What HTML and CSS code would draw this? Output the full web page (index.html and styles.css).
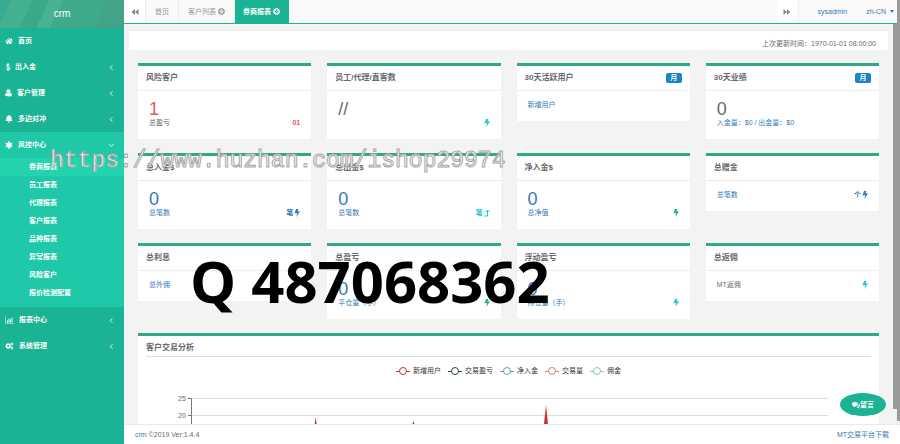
FILE: index.html
```html
<!DOCTYPE html>
<html lang="zh-CN">
<head>
  <meta charset="UTF-8">
  <title>crm</title>
  <link rel="stylesheet" href="styles.css">
</head>
<body>
  <svg class="defs" aria-hidden="true">
    <symbol id="home" viewBox="0 0 16 16"><path d="M8 2 0 9l1 1 7-6 7 6 1-1-2-2V3h-2v2zM8 5.500 3 10v4h4v-3h2v3h4v-4z"/></symbol>
    <symbol id="dollar" viewBox="2 0 12 16"><path d="M12 5C11 2 5 2 5 5s7 2.500 7 6-7 3-8 0M8 0v16" fill="none" stroke="currentColor" stroke-width="2"/></symbol>
    <symbol id="user" viewBox="1 0 14 16"><circle cx="8" cy="4.500" r="4"/><path d="M1 14c0-5 2-6 4-6 2 1.500 4 1.500 6 0 2 0 4 1 4 6-1 1-13 1-14 0z"/></symbol>
    <symbol id="bell" viewBox="0 0 16 16"><path d="M8 0c1 0 1 1 1 1 6 2 3 7 6 11H1C4 8 1 3 7 1c0 0 0-1 1-1zM6 13h4c0 3-4 3-4 0z"/></symbol>
    <symbol id="asterisk" viewBox="0 0 16 16"><path d="M8 1v14M2 4.500l12 7M14 4.500l-12 7" stroke="currentColor" stroke-width="4"/></symbol>
    <symbol id="bars" viewBox="0 0 16 16"><path d="M0 1h1v13h15v1H0zM3 9h2v4H3zM6 5h2v8H6zM9 7h2v6H9zM12 3h2v10h-2z"/></symbol>
    <symbol id="cogs" viewBox="0 0 16 16"><g fill="none" stroke="currentColor"><circle cx="5.500" cy="8" r="3.500" stroke-width="3"/><circle cx="5.500" cy="8" r="5" stroke-width="1.500" stroke-dasharray="2 2"/><circle cx="13" cy="4" r="1.800" stroke-width="2"/><circle cx="13" cy="12" r="1.800" stroke-width="2"/></g></symbol>
    <symbol id="left" viewBox="0 0 16 16"><path d="M10 3 5 8l5 5" fill="none" stroke="currentColor" stroke-width="2"/></symbol>
    <symbol id="down" viewBox="0 0 16 16"><path d="m3 5 5 5 5-5" fill="none" stroke="currentColor" stroke-width="2"/></symbol>
    <symbol id="backward" viewBox="0 0 16 16"><path d="M8 2v12L1 8zM15 2v12L8 8z"/></symbol>
    <symbol id="forward" viewBox="0 0 16 16"><path d="M1 2v12l7-6zM8 2v12l7-6z"/></symbol>
    <symbol id="close" viewBox="0 0 16 16"><circle cx="8" cy="8" r="6" fill="none" stroke="currentColor" stroke-width="3"/><path d="m5.500 5.500 5 5m0-5-5 5" stroke="currentColor" stroke-width="2"/></symbol>
    <symbol id="bolt" viewBox="2 0 12 16"><path d="M6 0h5L9 5l5-1L7 16l1-8-5 1z"/></symbol>
    <symbol id="levelup" viewBox="2 0 12 16"><path d="M3 14h6V4M5 6l4-4 4 4" fill="none" stroke="currentColor" stroke-width="2"/></symbol>
    <symbol id="comments" viewBox="0 0 16 16"><path d="M6 2c8 0 8 9 0 9-1 0-2 1-4 1l1-2C-2 8-1 2 6 2zM13 5c4 2 4 6 1 7l1 3c-3 0-4-2-6-2 4-1 5-4 4-8z"/></symbol>
  </svg>

  <div class="wrapper">
    <nav class="sidebar">
      <div class="brand">crm</div>
      <ul class="menu">
        <li><a href="#"><svg class="icon"><use href="#home"/></svg>首页</a></li>
        <li><a href="#"><svg class="icon narrow"><use href="#dollar"/></svg>出入金<svg class="arrow"><use href="#left"/></svg></a></li>
        <li><a href="#"><svg class="icon user"><use href="#user"/></svg>客户管理<svg class="arrow"><use href="#left"/></svg></a></li>
        <li><a href="#"><svg class="icon"><use href="#bell"/></svg>多边对冲<svg class="arrow"><use href="#left"/></svg></a></li>
        <li class="open">
          <a href="#"><svg class="icon"><use href="#asterisk"/></svg>风控中心<svg class="arrow"><use href="#down"/></svg></a>
          <ul class="submenu">
            <li class="current"><a href="#">券商报表</a></li>
            <li><a href="#">员工报表</a></li>
            <li><a href="#">代理报表</a></li>
            <li><a href="#">客户报表</a></li>
            <li><a href="#">品种报表</a></li>
            <li><a href="#">异常报表</a></li>
            <li><a href="#">风险客户</a></li>
            <li><a href="#">报价检测配置</a></li>
          </ul>
        </li>
        <li><a href="#"><svg class="icon wide"><use href="#bars"/></svg>报表中心<svg class="arrow"><use href="#left"/></svg></a></li>
        <li><a href="#"><svg class="icon wide"><use href="#cogs"/></svg>系统管理<svg class="arrow"><use href="#left"/></svg></a></li>
      </ul>
    </nav>

    <div class="page">
      <header class="topbar">
        <button class="roll" aria-label="向左"><svg class="icon"><use href="#backward"/></svg></button>
        <div class="tabs">
          <a href="#" class="tab">首页</a>
          <a href="#" class="tab">客户列表<svg class="close"><use href="#close"/></svg></a>
          <a href="#" class="tab active">券商报表<svg class="close"><use href="#close"/></svg></a>
        </div>
        <button class="roll" aria-label="向右"><svg class="icon"><use href="#forward"/></svg></button>
        <a href="#" class="account">sysadmin</a>
        <a href="#" class="lang">zh-CN<span class="caret"></span></a>
      </header>

      <main class="content">
        <div class="update">上次更新时间：1970-01-01 08:00:00</div>

        <div class="cards">
          <section class="card">
            <h5>风险客户</h5>
            <div class="body danger"><div class="num">1</div><div class="line"><span class="grey">总盈亏</span><b>01</b></div></div>
          </section>
          <section class="card">
            <h5>员工/代理/直客数</h5>
            <div class="body plain"><div class="num">//</div><div class="line"><span></span><b class="cyan"><svg><use href="#bolt"/></svg></b></div></div>
          </section>
          <section class="card">
            <h5>30天活跃用户<span class="badge">月</span></h5>
            <div class="body"><div class="line"><a href="#">新增用户</a></div></div>
          </section>
          <section class="card">
            <h5>30天业绩<span class="badge">月</span></h5>
            <div class="body"><div class="num grey">0</div><div class="line"><a href="#">入金量：$0 / 出金量：$0</a></div></div>
          </section>

          <section class="card">
            <h5>总入金$</h5>
            <div class="body"><div class="num">0</div><div class="line"><a href="#">总笔数</a><b>笔<svg><use href="#bolt"/></svg></b></div></div>
          </section>
          <section class="card">
            <h5>总出金$</h5>
            <div class="body"><div class="num">0</div><div class="line"><a href="#">总笔数</a><b class="cyan">笔 <svg><use href="#levelup"/></svg></b></div></div>
          </section>
          <section class="card">
            <h5>净入金$</h5>
            <div class="body"><div class="num">0</div><div class="line"><a href="#">总净值</a><b class="green"><svg><use href="#bolt"/></svg></b></div></div>
          </section>
          <section class="card">
            <h5>总赠金</h5>
            <div class="body"><div class="line"><a href="#">总笔数</a><b>个 <svg><use href="#bolt"/></svg></b></div></div>
          </section>

          <section class="card">
            <h5>总利息</h5>
            <div class="body"><div class="line"><a href="#">总外佣</a></div></div>
          </section>
          <section class="card">
            <h5>总盈亏</h5>
            <div class="body"><div class="num">0</div><div class="line"><a href="#">平仓量（手）</a><b class="green"><svg><use href="#bolt"/></svg></b></div></div>
          </section>
          <section class="card">
            <h5>浮动盈亏</h5>
            <div class="body"><div class="num">0</div><div class="line"><a href="#">持仓量（手）</a><b class="cyan"><svg><use href="#bolt"/></svg></b></div></div>
          </section>
          <section class="card">
            <h5>总返佣</h5>
            <div class="body"><div class="line"><span class="grey">MT返佣</span><b class="cyan"><svg><use href="#bolt"/></svg></b></div></div>
          </section>
        </div>

        <section class="chart">
          <h5>客户交易分析</h5>
          <div class="legend">
            <span class="key red">新增用户</span>
            <span class="key navy">交易盈亏</span>
            <span class="key teal">净入金</span>
            <span class="key orange">交易量</span>
            <span class="key mint">佣金</span>
          </div>
          <div class="plot">
            <div class="axis"><span>25</span><span>20</span></div>
            <svg class="lines" viewBox="0 0 642 34" preserveAspectRatio="none">
              <path class="grid" d="M0 8.500h642M0 25.500h642"/>
              <path class="tick" d="M0 8.500h3M0 25.500h3M3.500 8v26"/>
              <path class="series" d="m127 34 1-7 1 7zM225 34l1-3 1 3zM357 34l2-19 2 19z"/>
            </svg>
          </div>
        </section>
      </main>

      <footer class="footer">
        <div><a href="#">crm</a> ©2019 Ver:1.4.4</div>
        <a href="#">MT交易平台下载</a>
      </footer>
    </div>
  </div>

  <div class="scrollbar"></div>
  <div class="scrollbar outer"></div>
  <button class="message"><svg><use href="#comments"/></svg>留言</button>
  <div class="watermark">https://www.huzhan.com/ishop29974</div>
  <div class="contact">Q 487068362</div>
</body>
</html>
```

FILE: styles.css
```css
* {
  box-sizing: border-box;
}

body {
  margin: 0;
  height: 100vh;
  overflow: hidden;
  font-family: "Liberation Sans", "Noto Sans CJK SC", sans-serif;
  font-size: 7px;
  line-height: 10px;
  color: #676a6c;
  background: #f3f3f4;
}

a {
  color: #337ab7;
  text-decoration: none;
}

ul {
  list-style: none;
  margin: 0;
  padding: 0;
}

button {
  font: inherit;
  border: 0;
  padding: 0;
}

svg {
  width: 8px;
  height: 8px;
  fill: currentColor;
  flex: none;
}

.defs {
  position: absolute;
  width: 0;
  height: 0;
}

.wrapper {
  display: flex;
  height: 100%;
}

/* sidebar */
.sidebar {
  width: 124px;
  flex: none;
  background: #1ab394;
}

.brand {
  height: 28px;
  line-height: 28px;
  text-align: center;
  font-size: 10px;
  color: #fff;
  background: linear-gradient(115deg, #38ac8e 8%, #43b08f 8% 24%, #3aa98a 24% 36%, #45b394 36% 46%, #3fa98c 46% 78%, #43a388 78%);
}

.menu a {
  display: flex;
  align-items: center;
  height: 26px;
  padding: 0 9px 0 5px;
  color: #fff;
  font-weight: bold;
}

.menu .icon {
  margin-right: 5px;
}

.menu .icon.narrow {
  width: 6px;
  margin-right: 4px;
}

.menu .icon.user {
  width: 7px;
}

.menu .icon.wide {
  width: 9px;
}

.menu .arrow {
  width: 7px;
  height: 7px;
  margin-left: auto;
}

.open {
  background: #1fc8a7;
  padding-bottom: 5px;
}

.menu .submenu a {
  height: 18px;
  padding-left: 29px;
}

.submenu .current {
  background: #23d3ae;
}

/* top bar */
.page {
  flex: 1;
  min-width: 0;
  display: flex;
  flex-direction: column;
}

.topbar {
  display: flex;
  flex: none;
  height: 24px;
  background: #fafafa;
  border-bottom: 1px solid #1ab394;
}

.roll {
  width: 22px;
  background: #fff;
  color: #888;
  border-right: 1px solid #eee;
}

.roll svg {
  display: block;
  margin: auto;
}

.tabs {
  display: flex;
  flex: 1;
}

.tab {
  display: flex;
  align-items: center;
  gap: 2px;
  padding: 0 9px;
  color: #999;
  border-right: 1px solid #eee;
}

.tab.active {
  padding: 0 8px;
  color: #fff;
  font-weight: bold;
  background: #1ab394;
  border-color: #1ab394;
}

.close {
  width: 7px;
  height: 7px;
}

.account,
.lang {
  display: flex;
  align-items: center;
  padding-left: 19px;
}

.lang {
  padding-right: 6px;
}

.caret {
  margin-left: 4px;
  border: 2px solid transparent;
  border-top: 3px solid #337ab7;
  border-bottom: 0;
}

/* content */
.content {
  flex: 1;
  min-height: 0;
  overflow: hidden;
  padding: 6px 12px 0 5px;
}

.update {
  height: 20px;
  padding: 8px 12px 0 0;
  text-align: right;
  background: #fff;
  border-top: 1px solid #e7eaec;
}

.cards {
  display: grid;
  grid-template-columns: repeat(4, 1fr);
  grid-auto-rows: 76px;
  align-items: start;
  gap: 14px 16px;
  padding: 13px 9px 0;
}

.card,
.chart {
  background: #fff;
  border-top: 3px solid #2fa98a;
}

h5 {
  display: flex;
  align-items: center;
  justify-content: space-between;
  height: 25px;
  margin: 0;
  padding: 0 8px;
  font-size: 8px;
  border-bottom: 1px solid #eee;
}

.badge {
  width: 16px;
  border-radius: 2px;
  font-size: 7px;
  text-align: center;
  color: #fff;
  background: #1c84c6;
}

.body {
  padding: 9px 11px 11px;
  color: #337ab7;
}

.num {
  font-size: 18px;
  line-height: 18px;
}

.line {
  display: flex;
  justify-content: space-between;
  align-items: center;
  height: 10px;
}

.line b {
  display: flex;
  align-items: center;
  gap: 1px;
}

.line b svg {
  width: 6px;
  height: 8px;
}

.danger {
  color: #ed5565;
}

.plain,
.grey {
  color: #676a6c;
}

.cyan {
  color: #23c6c8;
}

.green {
  color: #1ab394;
}

/* chart */
.chart {
  margin: 14px 9px 0;
  padding: 0 8px;
}

.chart h5 {
  height: 21px;
  padding: 4px 0 0;
  border-color: #ddd;
}

.legend {
  display: flex;
  justify-content: center;
  gap: 7px;
  padding-top: 9px;
  color: #333;
}

.key {
  display: flex;
  align-items: center;
  background: linear-gradient(var(--c), var(--c)) 0 5px / 14px 1px no-repeat;
}

.key::before {
  content: "";
  box-sizing: border-box;
  width: 8px;
  height: 8px;
  margin: 0 6px 0 3px;
  border: 1px solid var(--c);
  border-radius: 50%;
  background: #fff;
}

.red { --c: #c23531; }
.navy { --c: #2f4554; }
.teal { --c: #61a0a8; }
.orange { --c: #d48265; }
.mint { --c: #91c7ae; }

.plot {
  display: flex;
  gap: 2px;
  padding: 14px 43px 0 32px;
}

.axis span {
  display: block;
  height: 17px;
  line-height: 17px;
}

.lines {
  flex: 1;
  width: auto;
  min-width: 0;
  height: 34px;
}

.grid {
  stroke: #ddd;
}

.tick {
  stroke: #777;
}

.series {
  fill: #c23531;
}

.footer {
  display: flex;
  flex: none;
  justify-content: space-between;
  align-items: center;
  height: 20px;
  padding: 0 11px;
  background: #fff;
  border-top: 1px solid #e7eaec;
}

/* overlays */
.scrollbar {
  position: absolute;
  top: 24px;
  right: 0;
  bottom: 35px;
  width: 7px;
  background: #999;
}

.scrollbar.outer {
  top: 0;
  bottom: 23px;
  width: 3px;
}

.message {
  position: absolute;
  right: 14px;
  bottom: 28px;
  width: 46px;
  height: 23px;
  display: flex;
  align-items: center;
  justify-content: center;
  border-radius: 50%;
  font-weight: bold;
  color: #fff;
  background: #1ab394;
}

.watermark {
  position: absolute;
  top: 147px;
  left: 50px;
  font: 23px/28px "Liberation Mono", monospace;
  color: #fff;
  -webkit-text-stroke: 1px #a5a5a5;
}

.contact {
  position: absolute;
  top: 241px;
  left: 190px;
  font: bold 58px/80px "Open Sans", sans-serif;
  color: #000;
}
```
